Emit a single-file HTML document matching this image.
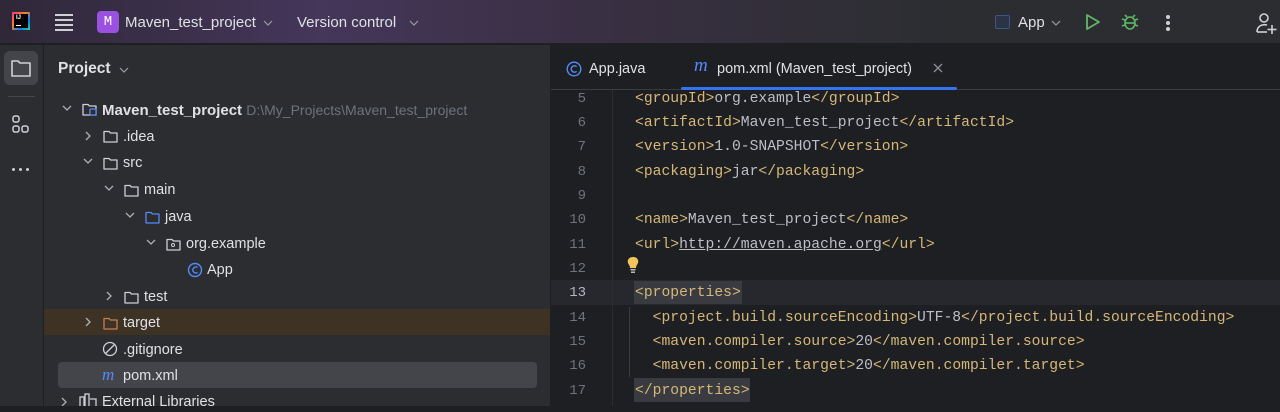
<!DOCTYPE html>
<html><head><meta charset="utf-8"><style>
*{margin:0;padding:0;box-sizing:border-box}
body{width:1280px;height:406px;overflow:hidden;background:#1e1f22;font-family:"Liberation Sans",sans-serif;position:relative;color:#dfe1e5}
.abs{position:absolute}
#title{left:0;top:0;width:1280px;height:44px;background:linear-gradient(90deg,#2f2838 0%,#45365a 25%,#3a3044 45%,#2b2d30 75%);border-bottom:1px solid #1e1f22}
#tb{left:0;top:45px;width:44px;height:361px;background:#2b2d30;border-right:1px solid #1e1f22}
#proj{left:44px;top:45px;width:506px;height:361px;background:#2b2d30}
#tabs{left:551px;top:45px;width:729px;height:45px;background:#1e1f22;border-bottom:1px solid #393b40}
.t{position:absolute;font-size:14.5px;white-space:nowrap;line-height:20px}
.code{position:absolute;left:635px;font-family:"Liberation Mono",monospace;font-size:14.7px;color:#d5b778;white-space:pre;line-height:20px}
.code span{color:#bcbec4}
.ln{position:absolute;left:552px;width:34px;text-align:right;font-family:"Liberation Mono",monospace;font-size:14px;color:#6f737a;line-height:20px}
svg{position:absolute}
</style></head><body>
<div id="title" class="abs"></div>
<div class="abs" style="left:12px;top:12px;width:18px;height:18px;background:linear-gradient(135deg,#ff318c,#fc801d 40%,#087cfa 70%,#21d789);"></div>
<div class="abs" style="left:14px;top:14px;width:14px;height:14px;background:#000;"></div>
<div class="abs" style="left:16px;top:15px;font-size:6px;color:#fff;font-weight:bold">IJ</div>
<div class="abs" style="left:16px;top:25px;width:5px;height:1px;background:#fff"></div>
<svg style="left:54px;top:13px" width="20" height="18"><g stroke="#ced0d6" stroke-width="2"><line x1="1" y1="2" x2="19" y2="2"/><line x1="1" y1="7" x2="19" y2="7"/><line x1="1" y1="12" x2="19" y2="12"/><line x1="1" y1="17" x2="19" y2="17"/></g></svg>
<div class="abs" style="left:97px;top:11px;width:22px;height:22px;border-radius:4px;background:#9b51e0;color:#fff;font-family:'Liberation Mono',monospace;font-size:14px;text-align:center;line-height:22px">M</div>
<div class="t" style="left:125px;top:13px;font-size:15px">Maven_test_project</div>
<svg style="left:263px;top:19px" width="10" height="8"><path d="M1 2 L5 6 L9 2" fill="none" stroke="#9a9da3" stroke-width="1.2"/></svg>
<div class="t" style="left:297px;top:13px;font-size:15px">Version control</div>
<svg style="left:409px;top:19px" width="10" height="8"><path d="M1 2 L5 6 L9 2" fill="none" stroke="#9a9da3" stroke-width="1.2"/></svg>
<div class="abs" style="left:995px;top:15px;width:15px;height:14px;border:1.5px solid #3f5485;border-radius:2px;background:#2b3346"></div>
<div class="t" style="left:1018px;top:13px;font-size:15px">App</div>
<svg style="left:1051px;top:19px" width="10" height="8"><path d="M1 2 L5 6 L9 2" fill="none" stroke="#9a9da3" stroke-width="1.2"/></svg>
<svg style="left:1084px;top:13px" width="18" height="18"><path d="M3 2 L15 9 L3 16 Z" fill="none" stroke="#5fb865" stroke-width="1.8" stroke-linejoin="round"/></svg>
<svg style="left:1120px;top:12px" width="20" height="20"><g fill="none" stroke="#5fb865" stroke-width="1.6"><ellipse cx="10" cy="11" rx="5" ry="6"/><line x1="5" y1="11" x2="15" y2="11"/><path d="M7 5 L5 3 M13 5 L15 3 M5 8 L2 7 M15 8 L18 7 M5 13 L2 14 M15 13 L18 14"/></g></svg>
<div class="abs" style="left:1166px;top:15px;width:4px;height:4px;border-radius:2px;background:#ced0d6;box-shadow:0 6px 0 #ced0d6,0 12px 0 #ced0d6"></div>
<svg style="left:1254px;top:11px" width="24" height="24"><g fill="none" stroke="#ced0d6" stroke-width="1.6"><circle cx="10" cy="7" r="4"/><path d="M3 21 C3 15 8 13 13 14"/><line x1="3" y1="21" x2="13" y2="21"/><line x1="18" y1="14" x2="18" y2="23"/><line x1="13.5" y1="18.5" x2="22.5" y2="18.5"/></g></svg>

<div id="tb" class="abs"></div>
<div class="abs" style="left:4px;top:51px;width:34px;height:34px;border-radius:6px;background:#43454a"></div>
<svg style="left:10px;top:58px" width="22" height="20"><path d="M2 3 H8 L10 5 H20 V18 H2 Z" fill="none" stroke="#ced0d6" stroke-width="1.6" stroke-linejoin="round"/></svg>
<div class="abs" style="left:8px;top:96px;width:27px;height:1px;background:#43454a"></div>
<svg style="left:11px;top:115px" width="22" height="22"><g fill="none" stroke="#ced0d6" stroke-width="1.5"><rect x="2" y="1" width="6" height="6" rx="2"/><rect x="2" y="11" width="6" height="6" rx="2"/><rect x="11" y="11" width="6" height="6" rx="2"/></g></svg>
<div class="abs" style="left:12px;top:168px;width:3px;height:3px;border-radius:2px;background:#ced0d6;box-shadow:7px 0 0 #ced0d6,14px 0 0 #ced0d6"></div>

<div id="proj" class="abs"></div>
<div class="t" style="left:58px;top:59px;font-size:15.5px;font-weight:bold">Project</div>
<svg style="left:119px;top:66px" width="10" height="8"><path d="M1 2 L5 6 L9 2" fill="none" stroke="#9a9da3" stroke-width="1.2"/></svg>
<div class="abs" style="left:44px;top:309px;width:506px;height:26px;background:#3d3223"></div>
<div class="abs" style="left:58px;top:362px;width:479px;height:26px;border-radius:4px;background:#43454a"></div>

<svg style="left:0;top:0" width="550" height="406">
<defs>
<path id="fd" d="M1 2.5 H6 L7.5 4 H14 V13 H1 Z" fill="none" stroke="#ced0d6" stroke-width="1.3" stroke-linejoin="round"/>
</defs>
<g fill="none" stroke="#aeb0b6" stroke-width="1.3">
<path d="M63 106 L67 110 L71 106"/>
<path d="M86 132 L90 136 L86 140"/>
<path d="M84 159 L88 163 L92 159"/>
<path d="M105 186 L109 190 L113 186"/>
<path d="M126 213 L130 217 L134 213"/>
<path d="M147 240 L151 244 L155 240"/>
<path d="M107 292 L111 296 L107 300"/>
<path d="M86 318 L90 322 L86 326"/>
<path d="M62 398 L66 402 L62 406"/>
</g>
<use href="#fd" x="82" y="102"/>
<rect x="90" y="109" width="6" height="6" rx="1" fill="#2b2d30" stroke="#548af7" stroke-width="1.3"/>
<use href="#fd" x="103" y="129"/>
<use href="#fd" x="103" y="156"/>
<use href="#fd" x="124" y="183"/>
<path d="M1 2.5 H6 L7.5 4 H14 V13 H1 Z" transform="translate(145,210)" fill="none" stroke="#548af7" stroke-width="1.3" stroke-linejoin="round"/>
<use href="#fd" x="166" y="237"/>
<circle cx="173" cy="245" r="1.5" fill="none" stroke="#ced0d6"/>
<circle cx="195" cy="270" r="6.5" fill="none" stroke="#548af7" stroke-width="1.4"/>
<path d="M197.5 267.5 A3 3 0 1 0 197.5 272.5" fill="none" stroke="#548af7" stroke-width="1.4"/>
<use href="#fd" x="124" y="290"/>
<path d="M1 2.5 H6 L7.5 4 H14 V13 H1 Z" transform="translate(103,316)" fill="none" stroke="#c77d55" stroke-width="1.3" stroke-linejoin="round"/>
<circle cx="110" cy="349" r="6.5" fill="none" stroke="#ced0d6" stroke-width="1.3"/>
<line x1="105.5" y1="353.5" x2="114.5" y2="344.5" stroke="#ced0d6" stroke-width="1.3"/>
<g fill="none" stroke="#ced0d6" stroke-width="1.3"><rect x="80" y="397" width="4" height="10"/><rect x="85" y="394" width="4" height="13"/><path d="M90 399 H96 V407"/></g>
</svg>
<div class="t" style="left:102px;top:100px;font-weight:bold;font-size:15px">Maven_test_project <span style="font-weight:normal;color:#6f737a;font-size:14px">D:\My_Projects\Maven_test_project</span></div>
<div class="t" style="left:123px;top:127px">.idea</div>
<div class="t" style="left:123px;top:153px">src</div>
<div class="t" style="left:144px;top:180px">main</div>
<div class="t" style="left:165px;top:207px">java</div>
<div class="t" style="left:186px;top:234px">org.example</div>
<div class="t" style="left:207px;top:260px">App</div>
<div class="t" style="left:144px;top:287px">test</div>
<div class="t" style="left:123px;top:313px">target</div>
<div class="t" style="left:123px;top:340px">.gitignore</div>
<div class="t" style="left:102px;top:365px;color:#548af7;font-style:italic;font-size:17px;font-family:'Liberation Serif',serif">m</div>
<div class="t" style="left:123px;top:366px">pom.xml</div>
<div class="t" style="left:102px;top:392px">External Libraries</div>

<div id="tabs" class="abs"></div>
<svg style="left:566px;top:61px" width="16" height="16"><circle cx="8" cy="8" r="6.8" fill="none" stroke="#548af7" stroke-width="1.4"/><path d="M10.6 5.6 A3.2 3.2 0 1 0 10.6 10.4" fill="none" stroke="#548af7" stroke-width="1.4"/></svg>
<div class="t" style="left:589px;top:59px">App.java</div>
<div class="t" style="left:694px;top:56px;color:#548af7;font-style:italic;font-size:19px;font-family:'Liberation Serif',serif">m</div>
<div class="t" style="left:717px;top:59px">pom.xml (Maven_test_project)</div>
<svg style="left:933px;top:63px" width="10" height="10"><path d="M1 1 L9 9 M9 1 L1 9" stroke="#8c8f94" stroke-width="1.3"/></svg>
<div class="abs" style="left:681px;top:87px;width:276px;height:3px;border-radius:2px;background:#3574f0"></div>

<div class="abs" style="left:551px;top:280px;width:729px;height:25px;background:#26282e"></div>
<div class="abs" style="left:612px;top:90px;width:1px;height:316px;background:#2b2d30"></div>
<div class="abs" style="left:634px;top:281px;width:108px;height:23px;background:#393b40"></div>
<div class="abs" style="left:634px;top:378px;width:116px;height:24px;background:#393b40"></div>
<div class="abs" style="left:629px;top:307px;width:1px;height:70px;background:#393b40"></div>
<svg style="left:625px;top:256px" width="16" height="18"><path d="M8 1 C4 1 2 4 3 7 C4 9 5 10 5 12 H11 C11 10 12 9 13 7 C14 4 12 1 8 1 Z" fill="#f2c55c"/><rect x="5.5" y="13" width="5" height="1.5" fill="#bbb"/><rect x="6" y="15.5" width="4" height="1.5" fill="#bbb"/></svg>

<div class="ln" style="top:89px">5</div>
<div class="ln" style="top:113px">6</div>
<div class="ln" style="top:137px">7</div>
<div class="ln" style="top:162px">8</div>
<div class="ln" style="top:186px">9</div>
<div class="ln" style="top:210px">10</div>
<div class="ln" style="top:235px">11</div>
<div class="ln" style="top:259px">12</div>
<div class="ln" style="top:283px;color:#b5b7bd">13</div>
<div class="ln" style="top:308px">14</div>
<div class="ln" style="top:332px">15</div>
<div class="ln" style="top:356px">16</div>
<div class="ln" style="top:381px">17</div>

<div class="code" style="top:89px">&lt;groupId&gt;<span>org.example</span>&lt;/groupId&gt;</div>
<div class="code" style="top:113px">&lt;artifactId&gt;<span>Maven_test_project</span>&lt;/artifactId&gt;</div>
<div class="code" style="top:137px">&lt;version&gt;<span>1.0-SNAPSHOT</span>&lt;/version&gt;</div>
<div class="code" style="top:162px">&lt;packaging&gt;<span>jar</span>&lt;/packaging&gt;</div>
<div class="code" style="top:210px">&lt;name&gt;<span>Maven_test_project</span>&lt;/name&gt;</div>
<div class="code" style="top:235px">&lt;url&gt;<span style="text-decoration:underline">http://maven.apache.org</span>&lt;/url&gt;</div>
<div class="code" style="top:283px">&lt;properties&gt;</div>
<div class="code" style="top:308px">  &lt;project.build.sourceEncoding&gt;<span>UTF-8</span>&lt;/project.build.sourceEncoding&gt;</div>
<div class="code" style="top:332px">  &lt;maven.compiler.source&gt;<span>20</span>&lt;/maven.compiler.source&gt;</div>
<div class="code" style="top:356px">  &lt;maven.compiler.target&gt;<span>20</span>&lt;/maven.compiler.target&gt;</div>
<div class="code" style="top:381px">&lt;/properties&gt;</div>
</body></html>
